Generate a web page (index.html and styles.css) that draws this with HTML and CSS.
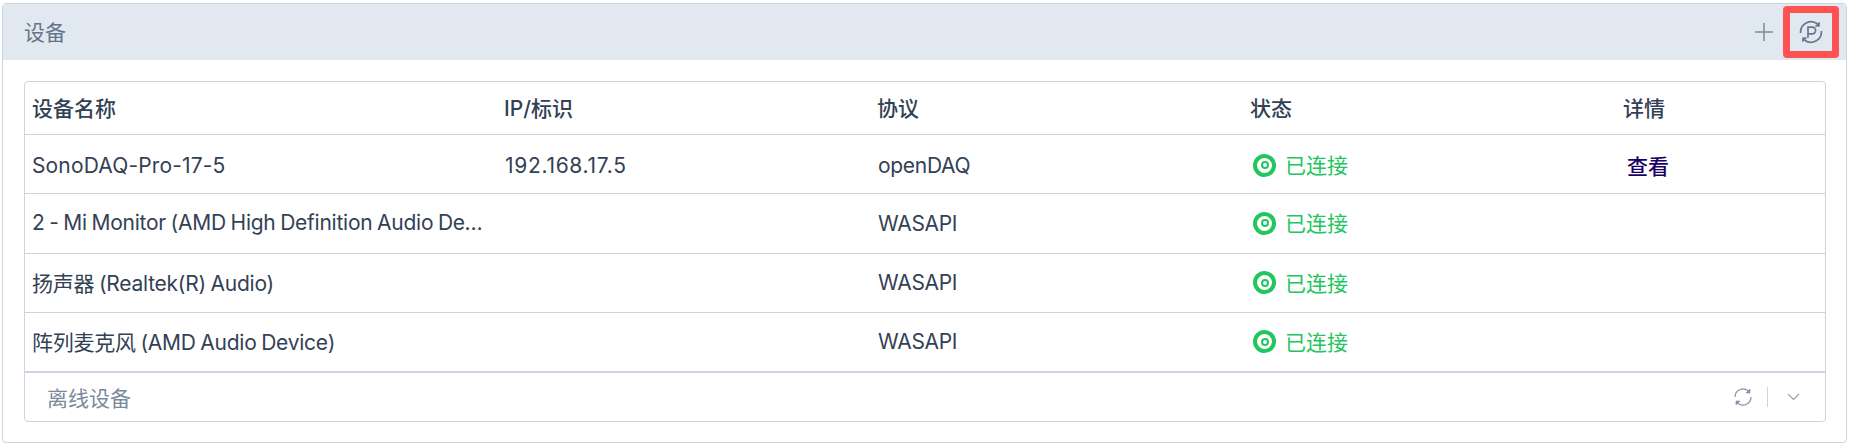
FILE: index.html
```html
<!DOCTYPE html>
<html lang="zh-CN">
<head>
    <meta charset="UTF-8">
    <title>设备</title>
    <link rel="stylesheet" href="styles.css">
</head>
<body>
    <div class="panel">
        <div class="panel-head">
            <span class="panel-title">设备</span>
            <div class="panel-actions">
                <button class="icon-btn">
                    <svg width="20" height="20" viewBox="0 0 20 20" fill="none" stroke="#7b899c" stroke-width="1.5"><path d="M10 1v18M1 10h18"/></svg>
                </button>
                <button class="icon-btn marked">
                    <svg width="26" height="26" viewBox="0 0 26 26" fill="none" stroke="#66768c" stroke-width="1.7">
                        <path d="M2.6 14A10.5 10.5 0 0 1 19.6 5"/>
                        <path d="M23.4 12A10.5 10.5 0 0 1 6.4 21"/>
                        <path d="M21.4 3.2v4h-4z" fill="#66768c" stroke-width=".8"/>
                        <path d="M4.6 22.8v-4h4z" fill="#66768c" stroke-width=".8"/>
                        <path d="M10 18.8V8.2h4.3a3.3 3.3 0 0 1 0 6.6H10"/>
                    </svg>
                </button>
            </div>
        </div>
        <div class="panel-body">
            <div class="device-box">
                <div class="device-row head-row">
                    <div>设备名称</div>
                    <div>IP/标识</div>
                    <div>协议</div>
                    <div>状态</div>
                    <div>详情</div>
                </div>
                <div class="device-row first-row">
                    <div class="name">SonoDAQ-Pro-17-5</div>
                    <div class="ip">192.168.17.5</div>
                    <div class="proto">openDAQ</div>
                    <div class="status"><span class="dot"></span>已连接</div>
                    <div><a class="detail-link">查看</a></div>
                </div>
                <div class="device-row">
                    <div class="name">2 - Mi Monitor (AMD High Definition Audio Device)</div>
                    <div></div>
                    <div class="proto">WASAPI</div>
                    <div class="status"><span class="dot"></span>已连接</div>
                    <div></div>
                </div>
                <div class="device-row">
                    <div class="name">扬声器 (Realtek(R) Audio)</div>
                    <div></div>
                    <div class="proto">WASAPI</div>
                    <div class="status"><span class="dot"></span>已连接</div>
                    <div></div>
                </div>
                <div class="device-row">
                    <div class="name">阵列麦克风 (AMD Audio Device)</div>
                    <div></div>
                    <div class="proto">WASAPI</div>
                    <div class="status"><span class="dot"></span>已连接</div>
                    <div></div>
                </div>
                <div class="offline-bar">
                    <span>离线设备</span>
                    <div class="offline-tools">
                        <svg width="20" height="20" viewBox="0 0 20 20" fill="none" stroke="#8492a6" stroke-width="1.2">
                            <path d="M2 10A8 8 0 0 1 16 4.7"/>
                            <path d="M18 10A8 8 0 0 1 4 15.3"/>
                            <path d="M17 2v4h-4z" fill="#8492a6" stroke-width=".6"/>
                            <path d="M3 18v-4h4z" fill="#8492a6" stroke-width=".6"/>
                        </svg>
                        <span class="tool-sep"></span>
                        <svg width="13" height="8" viewBox="0 0 13 8" fill="none" stroke="#94a3b8" stroke-width="1.2"><path d="M1 1l5.5 5.5L12 1"/></svg>
                    </div>
                </div>
            </div>
        </div>
    </div>
</body>
</html>
```

FILE: styles.css
```css
body {
    margin: 0;
    padding: 3px 3px 2px 2px;
    background: #fff;
    font-family: Inter, "Noto Sans CJK SC", sans-serif;
    font-size: 21px;
    color: #334155;
}
.panel {
    border: 1px solid #cbd5e1;
    border-radius: 4px;
    height: 440px;
    box-sizing: border-box;
}
.panel-head {
    height: 56px;
    background: #e2e8f0;
    display: flex;
    align-items: center;
    justify-content: space-between;
    padding: 0 7px 0 21px;
}
.panel-title {
    color: #64748b;
    padding-bottom: 2px;
}
.panel-actions {
    display: flex;
    align-items: center;
    gap: 6px;
}
.icon-btn {
    border: none;
    background: none;
    padding: 0;
    width: 26px;
    height: 40px;
    display: flex;
    align-items: center;
    justify-content: center;
    box-sizing: border-box;
}
.marked {
    width: 56px;
    height: 52px;
    border: 7px solid #ff5252;
    border-radius: 4px;
}
.panel-body {
    padding: 21px 20px 0 21px;
}
.device-box {
    border: 1px solid #cbd5e1;
    border-radius: 4px;
}
.device-row {
    display: grid;
    grid-template-columns: 472px 373px 373px 373px 1fr;
    height: 59.25px;
    box-sizing: border-box;
    border-bottom: 1px solid #cbd5e1;
    align-items: center;
}
.head-row {
    height: 53px;
    padding-bottom: 2px;
    font-weight: 500;
}
.first-row {
    padding-top: 2px;
}
.device-row > div {
    padding-left: 8px;
    padding-right: 8px;
    white-space: nowrap;
    overflow: hidden;
    text-overflow: ellipsis;
}
.device-row > div:first-child {
    padding-left: 7px;
}
.head-row > div:not(:first-child) {
    padding-left: 7px;
}
.device-row > .name {
    padding-right: 13px;
    padding-bottom: 2px;
    letter-spacing: -0.25px;
    word-spacing: -1px;
}
.first-row > .name {
    padding-bottom: 0;
    letter-spacing: 0.15px;
}
.ip {
    letter-spacing: 0.7px;
}
.proto {
    letter-spacing: -0.3px;
}
.device-row > .status {
    display: flex;
    align-items: center;
    gap: 9px;
    color: #22c55e;
    padding-left: 10px;
    padding-bottom: 2px;
}
.dot {
    width: 23px;
    height: 23px;
    margin-top: 2px;
    border: 4px solid #22c55e;
    border-radius: 50%;
    box-sizing: border-box;
    display: flex;
    align-items: center;
    justify-content: center;
}
.dot::after {
    content: "";
    width: 4px;
    height: 4px;
    border: 2.5px solid #22c55e;
    border-radius: 50%;
}
.detail-link {
    color: #1a0066;
    font-weight: 500;
    padding-left: 3px;
}
.offline-bar {
    height: 48px;
    display: flex;
    align-items: center;
    justify-content: space-between;
    padding: 0 25px 0 22px;
    color: #7b899c;
    border-top: 1px solid #cbd5e1;
}
.offline-tools {
    display: flex;
    align-items: center;
}
.tool-sep {
    width: 1px;
    height: 20px;
    margin: 0 19px 0 14px;
    background: #cbd5e1;
}
```
